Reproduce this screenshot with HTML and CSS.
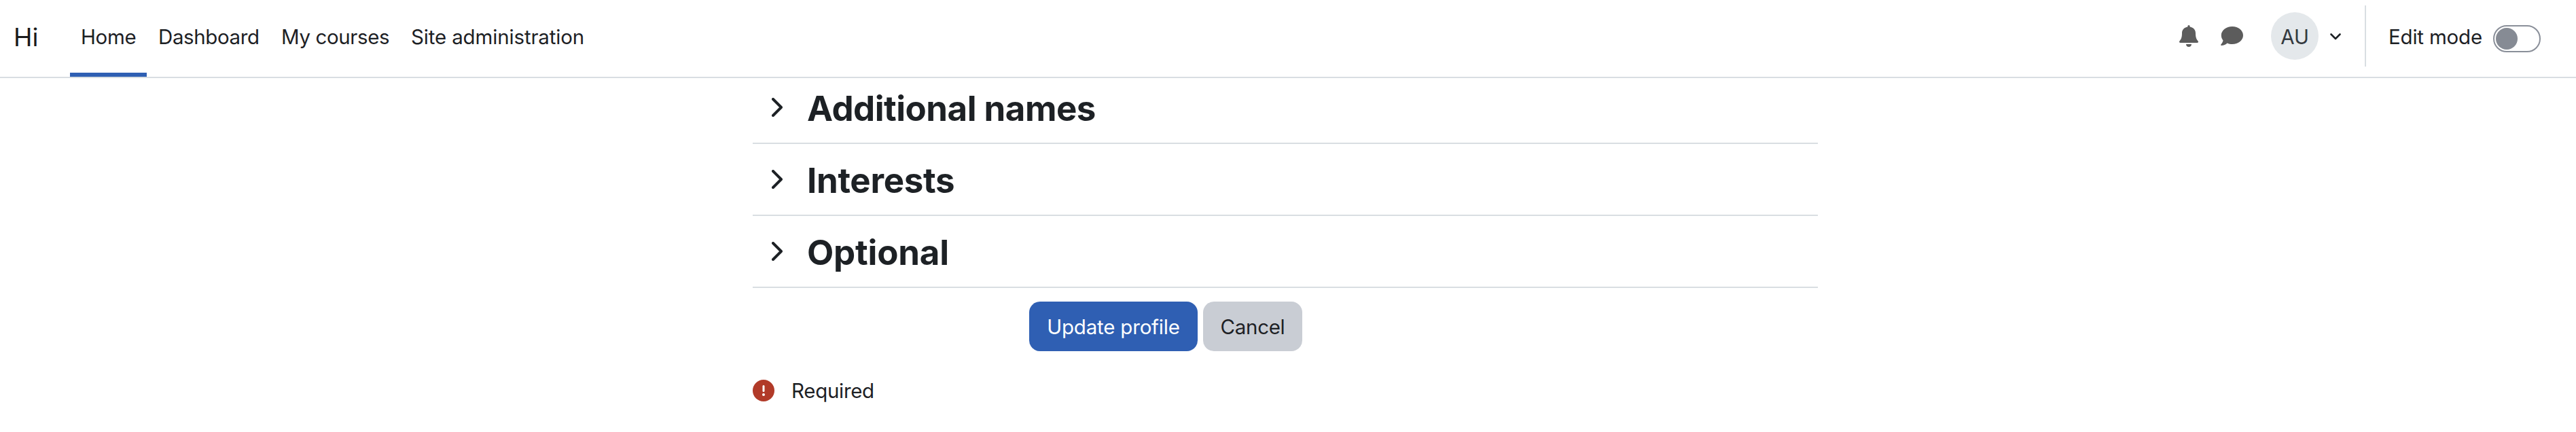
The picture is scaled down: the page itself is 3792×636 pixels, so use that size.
FILE: index.html
```html
<!DOCTYPE html>
<html lang="en">
<head>
<meta charset="utf-8">
<title>Edit profile</title>
<link rel="stylesheet" href="styles.css">
</head>
<body>
<header class="navbar">
  <a class="brand">Hi</a>
  <nav class="nav">
    <a class="nav-link home active"><span>Home</span></a>
    <a class="nav-link dashboard"><span>Dashboard</span></a>
    <a class="nav-link courses"><span>My courses</span></a>
    <a class="nav-link admin"><span>Site administration</span></a>
  </nav>
  <div class="tools">
    <svg class="bell" viewBox="0 0 28 32"><path d="M12.4 2.6V1.6a1.6 1.6 0 0 1 3.2 0v1C21 3.5 24 7 24 12c0 6.500 1.500 9 3.600 11.600C28.400 24.700 28 26 26.500 26h-25C0 26 -.4 24.700.4 23.600 2.500 21 4 18.500 4 12c0-5 3-8.500 8.400-9.400zM10 28h8c0 2.500-1.700 4-4 4s-4-1.500-4-4z"/></svg>
    <svg class="comment" viewBox="0 0 33 28"><path d="M17 0c9 0 16 5.700 16 13s-7 13-16 13c-2.700 0-5.200-.5-7.400-1.500C7.500 26.500 4.500 28 1 28c-.8 0-1.200-.9-.6-1.500C2 24.700 3.200 22.600 3.500 20.500 1.700 18.400.8 15.800.8 13 .8 5.700 8 0 17 0z"/></svg>
    <span class="avatar">AU</span>
    <svg class="caret" viewBox="0 0 16 10"><path d="M1.500 1.500 8 8l6.500-6.500"/></svg>
    <div class="edit">
      <span class="edit-label">Edit mode</span>
      <span class="switch"><span class="knob"></span></span>
    </div>
  </div>
</header>
<main class="form">
  <section class="row"><svg class="chevron" viewBox="0 0 16 28"><path d="M2 2l12 12L2 26"/></svg><h3 class="title additional">Additional names</h3></section>
  <section class="row"><svg class="chevron" viewBox="0 0 16 28"><path d="M2 2l12 12L2 26"/></svg><h3 class="title interests">Interests</h3></section>
  <section class="row"><svg class="chevron" viewBox="0 0 16 28"><path d="M2 2l12 12L2 26"/></svg><h3 class="title optional">Optional</h3></section>
  <div class="actions">
    <button class="btn primary">Update profile</button>
    <button class="btn secondary">Cancel</button>
  </div>
  <div class="required">
    <svg class="alert" viewBox="0 0 32 32"><circle cx="16" cy="16" r="16" fill="#b13a28"/><path d="M16 9.500v7" stroke="#fff" stroke-width="3" stroke-linecap="round"/><circle cx="16" cy="22" r="2" fill="#fff"/></svg>
    <span>Required</span>
  </div>
</main>
</body>
</html>
```

FILE: styles.css
```css
* { box-sizing: border-box; }
body {
  margin: 0;
  height: 636px;
  overflow: hidden;
  background: #fff;
  color: #1d2125;
  font: 29.5px/44px Inter, "Liberation Sans", sans-serif;
}
svg { display: block; flex: none; }
.navbar {
  display: flex;
  height: 115px;
  border-bottom: 2px solid #d9dee2;
}
.brand {
  width: 103px;
  padding: 33px 0 0 20px;
  font-size: 37px;
  color: #1a1a1a;
}
.nav { display: flex; }
.nav-link {
  height: 113px;
  padding: 32px 0 0 16px;
  white-space: nowrap;
}
.nav-link.active { border-bottom: 6px solid #2f5fb3; }
.home { width: 113px; letter-spacing: -0.3px; }
.dashboard { width: 181px; padding-left: 17px; letter-spacing: -0.4px; }
.courses { width: 192px; padding-left: 17px; letter-spacing: -0.4px; }
.admin { width: 287px; letter-spacing: -0.15px; }
.tools {
  display: flex;
  align-items: flex-start;
  margin-left: auto;
}
.bell { width: 28px; height: 32px; margin: 37px 33px 0 0; fill: #5c5c5c; }
.comment { width: 33px; height: 28px; margin: 39px 41px 0 0; fill: #5c5c5c; }
.avatar {
  width: 70px;
  height: 70px;
  margin-top: 18px;
  padding-top: 14px;
  border-radius: 50%;
  background: #e4e8eb;
  color: #343a40;
  text-align: center;
}
.caret {
  width: 16px;
  height: 10px;
  margin: 49px 35px 0 17px;
  fill: none;
  stroke: #1d2125;
  stroke-width: 2.6;
  stroke-linecap: round;
  stroke-linejoin: round;
}
.edit {
  display: flex;
  width: 311px;
  height: 90px;
  margin-top: 8px;
  padding-left: 33px;
  border-left: 2px solid #d9dee2;
}
.edit-label { width: 154px; padding-top: 24px; letter-spacing: -0.2px; white-space: nowrap; }
.switch {
  width: 70px;
  height: 40px;
  margin-top: 29px;
  padding: 2px;
  border: 2px solid #8a8f99;
  border-radius: 20px;
}
.knob {
  display: block;
  width: 32px;
  height: 32px;
  border-radius: 50%;
  background: #868b94;
}
.form { width: 1568px; margin-left: 1108px; }
.row {
  display: flex;
  align-items: center;
  height: 106px;
  padding-left: 28px;
  border-bottom: 2px solid #d9dee2;
}
.row:first-child { height: 97px; padding-bottom: 9px; }
.chevron {
  width: 16px;
  height: 28px;
  margin-right: 36px;
  fill: none;
  stroke: #1d2125;
  stroke-width: 4;
  stroke-linecap: round;
  stroke-linejoin: round;
}
.title {
  margin: 3px 0 0;
  font-size: 51px;
  line-height: 64px;
  font-weight: 700;
  white-space: nowrap;
}
.additional { letter-spacing: -0.5px; }
.interests { letter-spacing: -0.3px; }
.optional { letter-spacing: -0.2px; }
.actions { display: flex; gap: 8px; padding: 20px 0 0 407px; }
.btn {
  height: 73px;
  padding: 0;
  border: 0;
  border-radius: 16px;
  font: inherit;
  white-space: nowrap;
}
.primary { width: 248px; background: #2f5fb3; color: #fff; letter-spacing: -0.2px; }
.secondary { width: 146px; background: #c9cdd4; color: #1d2125; letter-spacing: -0.3px; }
.required { display: flex; align-items: center; gap: 25px; height: 44px; margin-top: 36px; letter-spacing: -0.3px; }
.alert { width: 32px; height: 32px; }
```
